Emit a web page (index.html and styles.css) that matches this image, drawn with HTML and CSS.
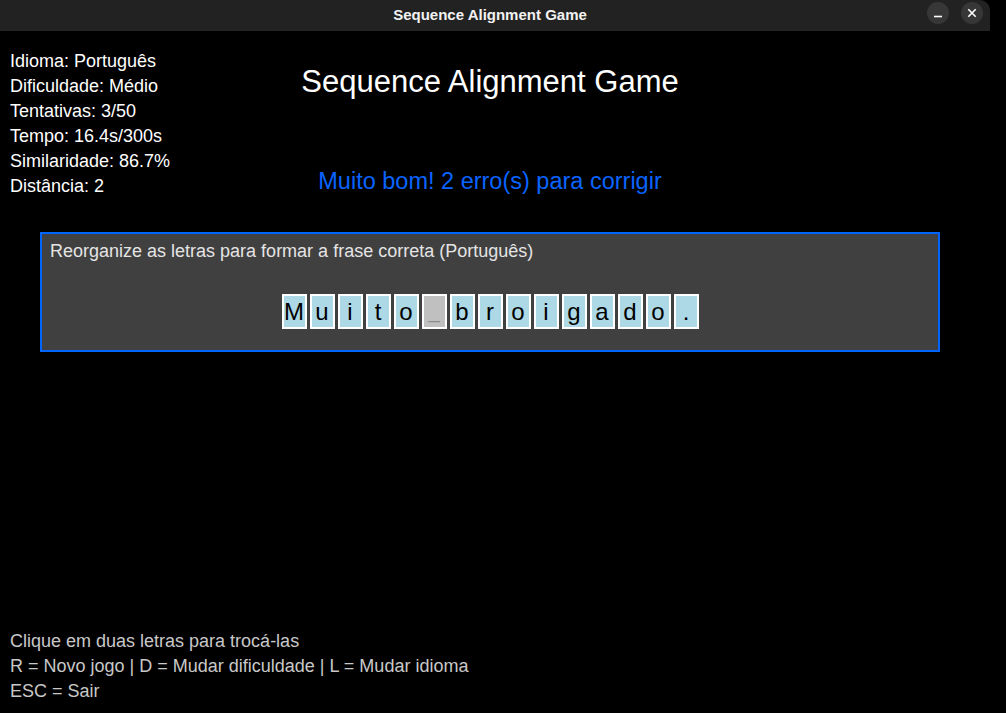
FILE: index.html
```html
<!DOCTYPE html>
<html lang="pt">
<head>
<meta charset="utf-8">
<title>Sequence Alignment Game</title>
<link rel="stylesheet" href="styles.css">
</head>
<body>
<div class="window">
  <header class="titlebar">
    <span class="titlebar-title">Sequence Alignment Game</span>
    <div class="controls">
      <span class="ctl">
        <svg width="22" height="22" viewBox="0 0 22 22"><path d="M7 14.5h8" stroke="#fff" stroke-width="1.6"/></svg>
      </span>
      <span class="ctl">
        <svg width="22" height="22" viewBox="0 0 22 22"><path d="M7.3 7.3l7.4 7.4M14.7 7.3l-7.4 7.4" stroke="#fff" stroke-width="1.6"/></svg>
      </span>
    </div>
  </header>
  <main class="game">
    <section class="top">
      <ul class="stats">
        <li>Idioma: Português</li>
        <li>Dificuldade: Médio</li>
        <li>Tentativas: 3/50</li>
        <li>Tempo: 16.4s/300s</li>
        <li>Similaridade: 86.7%</li>
        <li>Distância: 2</li>
      </ul>
      <div class="heading">
        <h1 class="game-title">Sequence Alignment Game</h1>
        <p class="status">Muito bom! 2 erro(s) para corrigir</p>
      </div>
    </section>
    <section class="board">
      <p class="hint">Reorganize as letras para formar a frase correta (Português)</p>
      <div class="tiles">
        <span class="tile">M</span>
        <span class="tile">u</span>
        <span class="tile">i</span>
        <span class="tile">t</span>
        <span class="tile">o</span>
        <span class="tile space">_</span>
        <span class="tile">b</span>
        <span class="tile">r</span>
        <span class="tile">o</span>
        <span class="tile">i</span>
        <span class="tile">g</span>
        <span class="tile">a</span>
        <span class="tile">d</span>
        <span class="tile">o</span>
        <span class="tile">.</span>
      </div>
    </section>
    <footer class="help">
      <p>Clique em duas letras para trocá-las</p>
      <p>R = Novo jogo | D = Mudar dificuldade | L = Mudar idioma</p>
      <p>ESC = Sair</p>
    </footer>
  </main>
</div>
</body>
</html>
```
FILE: styles.css
```css
* { box-sizing: border-box; }

html, body {
  margin: 0;
  padding: 0;
  background: #000;
}

body {
  width: 1006px;
  height: 713px;
  overflow: hidden;
  font-family: "Liberation Sans", Arial, sans-serif;
}

.window {
  width: 990px;
  height: 713px;
  display: flex;
  flex-direction: column;
}

.titlebar {
  height: 31px;
  flex: none;
  background: #222222;
  border-top-right-radius: 10px;
  display: grid;
  grid-template-columns: 1fr auto 1fr;
  align-items: start;
}

.titlebar-title {
  grid-column: 2;
  margin-right: 10px;
  padding-top: 6px;
  color: #f2f2f2;
  font-family: "Liberation Sans", Arial, sans-serif;
  font-weight: bold;
  font-size: 15px;
  line-height: 17px;
}

.controls {
  grid-column: 3;
  justify-self: end;
  display: flex;
  gap: 12px;
  margin-top: 2px;
  margin-right: 7px;
}

.ctl {
  width: 22px;
  height: 22px;
  border-radius: 50%;
  background: #373737;
  display: block;
}

.ctl svg { display: block; }

.game {
  width: 980px;
  flex: 1;
  display: flex;
  flex-direction: column;
  background: #000;
}

.top {
  display: grid;
}

.stats {
  grid-area: 1 / 1;
  list-style: none;
  margin: 0;
  padding: 18px 0 0 10px;
  color: #ffffff;
  font-size: 18px;
  line-height: 25px;
}

.heading {
  grid-area: 1 / 1;
  display: flex;
  flex-direction: column;
  align-items: center;
  padding-top: 35px;
}

.game-title {
  margin: 0;
  font-weight: normal;
  font-size: 31px;
  line-height: 31px;
  color: #ffffff;
}

.status {
  margin: 73px 0 0;
  font-size: 23.5px;
  line-height: 23px;
  color: #0a64ff;
}

.board {
  width: 900px;
  height: 120px;
  margin: 33px 0 0 40px;
  border: 2px solid #0064ff;
  background: #404040;
  padding: 7px 8px 0;
}

.hint {
  margin: 0;
  font-size: 18px;
  line-height: 20px;
  color: #e4e4e4;
}

.tiles {
  margin-top: 33px;
  display: flex;
  justify-content: center;
  gap: 3px;
}

.tile {
  width: 25px;
  height: 35px;
  border: 2px solid #ffffff;
  background: #add8e6;
  color: #000;
  font-size: 24px;
  line-height: 31px;
  text-align: center;
}

.tile.space {
  background: #c0c0c0;
  color: #8c8c8c;
  font-size: 20px;
}

.help {
  margin-top: auto;
  padding: 0 0 9px 10px;
  color: #c8c8c8;
  font-size: 18px;
  line-height: 25px;
}

.help p { margin: 0; }
```
